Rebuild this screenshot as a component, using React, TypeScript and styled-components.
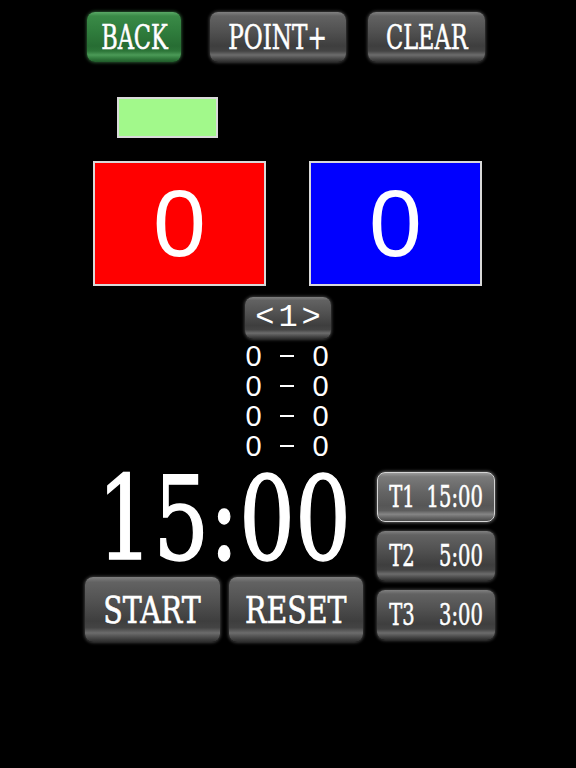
import React from "react";
import styled, { createGlobalStyle, css } from "styled-components";

type Tone = "gray" | "green" | "selected";

const GlobalStyle = createGlobalStyle`
  html, body {
    margin: 0;
    padding: 0;
    background: #000;
  }
  body {
    width: 576px;
    height: 768px;
    overflow: hidden;
    font-family: "DejaVu Serif", "Liberation Serif", serif;
    color: #fff;
  }
`;

const Screen = styled.div`
  width: 576px;
  height: 768px;
  background: #000;
  padding-top: 12px;
  box-sizing: border-box;
`;

const TopBar = styled.div`
  display: flex;
  align-items: center;
  padding-left: 87px;
`;

const tones = {
  gray: css`
    background: linear-gradient(
      to bottom,
      #808080 0%,
      #626262 8%,
      #505050 40%,
      #3e3e3e 68%,
      #444 78%,
      #6c6c6c 86%,
      #505050 92%,
      #2c2c2c 100%
    );
    box-shadow: 0 0 3px 1px rgba(110, 110, 110, 0.55);
  `,
  green: css`
    background: linear-gradient(
      to bottom,
      #5aa866 0%,
      #3a8a47 8%,
      #2f7c3c 40%,
      #276d33 68%,
      #2c7538 78%,
      #4b9a57 86%,
      #347f40 92%,
      #1f5a29 100%
    );
    box-shadow: 0 0 3px 1px rgba(70, 140, 80, 0.55);
  `,
  selected: css`
    background: linear-gradient(
      to bottom,
      #9a9a9a 0%,
      #7a7a7a 8%,
      #646464 40%,
      #565656 68%,
      #5c5c5c 78%,
      #858585 86%,
      #6a6a6a 92%,
      #4a4a4a 100%
    );
    box-shadow: 0 0 3px 1px rgba(160, 160, 160, 0.55);
  `,
};

const GlossButton = styled.button<{ $tone?: Tone; $w?: number; $h: number; $ml?: number }>`
  ${({ $tone = "gray" }) => tones[$tone]}
  width: ${({ $w }) => ($w ? `${$w}px` : "auto")};
  height: ${({ $h }) => $h}px;
  margin-left: ${({ $ml = 0 }) => $ml}px;
  border: ${({ $tone }) => ($tone === "selected" ? "1px solid #d4d4d4" : "none")};
  border-radius: 8px;
  padding: 0;
  display: flex;
  align-items: center;
  justify-content: center;
  color: #fff;
  cursor: pointer;
  box-sizing: border-box;
  overflow: hidden;
`;

const Label = styled.span<{ $size: number; $sx?: number }>`
  display: inline-block;
  flex-shrink: 0;
  font-family: "DejaVu Serif", "Liberation Serif", serif;
  font-size: ${({ $size }) => $size}px;
  line-height: 1;
  white-space: nowrap;
  -webkit-text-stroke: 0.7px #fff;
  transform: scaleX(${({ $sx = 0.7 }) => $sx});
  text-shadow: 0 0 1px rgba(0, 0, 0, 0.6);
`;

const Indicator = styled.div`
  margin: 35px 0 0 117px;
  width: 101px;
  height: 41px;
  background: #a2f98b;
  border: 2px solid #d9d9d9;
  box-sizing: border-box;
`;

const ScoreRow = styled.div`
  display: flex;
  gap: 43px;
  margin: 23px 0 0 93px;
`;

const ScoreBox = styled.div<{ $color: string }>`
  width: 173px;
  height: 125px;
  background: ${({ $color }) => $color};
  border: 2px solid #d9d9d9;
  box-sizing: border-box;
  display: flex;
  align-items: center;
  justify-content: center;
  font-family: "Liberation Sans", Arial, sans-serif;
  font-size: 95px;
  line-height: 1;
  color: #fff;
`;

const RoundNav = styled.div`
  display: flex;
  justify-content: center;
  margin-top: 11px;
`;

const NavLabel = styled.span`
  font-family: "Liberation Mono", "Courier New", monospace;
  font-size: 32px;
  line-height: 1;
  letter-spacing: 4px;
  padding-left: 4px;
  color: #fff;
`;

const History = styled.div`
  margin-top: 2px;
  display: flex;
  flex-direction: column;
  align-items: center;
`;

const HistoryLine = styled.div`
  display: grid;
  grid-template-columns: 17px 16px 17px;
  column-gap: 17px;
  justify-items: center;
  align-items: center;
  height: 30px;
  line-height: 28px;
  padding-right: 2px;
  font-family: "Liberation Sans", Arial, sans-serif;
  font-size: 29px;
  color: #fff;
`;

const Dash = styled.span`
  display: inline-block;
  width: 14px;
  height: 2px;
  background: #fff;
`;

const Bottom = styled.div`
  display: flex;
  gap: 14px;
  margin: 11px 0 0 85px;
`;

const TimerColumn = styled.div`
  width: 278px;
  display: flex;
  flex-direction: column;
`;

const Clock = styled.div`
  height: 93px;
  margin-bottom: 12px;
  display: flex;
  justify-content: center;
`;

const ClockText = styled.span`
  display: inline-block;
  font-family: "DejaVu Serif", "Liberation Serif", serif;
  font-size: 116px;
  line-height: 93px;
  -webkit-text-stroke: 1.5px #fff;
  transform: scaleX(0.76);
  white-space: nowrap;
  color: #fff;
`;

const ControlRow = styled.div`
  display: grid;
  grid-template-columns: 1fr 1fr;
  gap: 9px;
`;

const PresetColumn = styled.div`
  width: 118px;
  display: flex;
  flex-direction: column;
  gap: 9px;
`;

const PresetLabel = styled.span`
  display: inline-flex;
  flex-shrink: 0;
  justify-content: space-between;
  width: 144px;
  font-family: "DejaVu Serif", "Liberation Serif", serif;
  font-size: 30px;
  line-height: 1;
  white-space: nowrap;
  -webkit-text-stroke: 0.6px #fff;
  transform: scaleX(0.65);
`;

const history = [
  [0, 0],
  [0, 0],
  [0, 0],
  [0, 0],
];

const presets: { id: string; time: string; tone: Tone }[] = [
  { id: "T1", time: "15:00", tone: "selected" },
  { id: "T2", time: "5:00", tone: "gray" },
  { id: "T3", time: "3:00", tone: "gray" },
];

export default function App() {
  return (
    <Screen>
      <GlobalStyle />
      <TopBar>
        <GlossButton $tone="green" $w={94} $h={50}>
          <Label $size={34} $sx={0.66}>BACK</Label>
        </GlossButton>
        <GlossButton $w={136} $h={50} $ml={29}>
          <Label $size={34} $sx={0.68}>POINT+</Label>
        </GlossButton>
        <GlossButton $w={117} $h={50} $ml={22}>
          <Label $size={34} $sx={0.66}>CLEAR</Label>
        </GlossButton>
      </TopBar>

      <Indicator />

      <ScoreRow>
        <ScoreBox $color="#ff0000">0</ScoreBox>
        <ScoreBox $color="#0000ff">0</ScoreBox>
      </ScoreRow>

      <RoundNav>
        <GlossButton $w={86} $h={42}>
          <NavLabel>&lt;1&gt;</NavLabel>
        </GlossButton>
      </RoundNav>

      <History>
        {history.map(([a, b], i) => (
          <HistoryLine key={i}>
            <span>{a}</span>
            <Dash />
            <span>{b}</span>
          </HistoryLine>
        ))}
      </History>

      <Bottom>
        <TimerColumn>
          <Clock>
            <ClockText>15:00</ClockText>
          </Clock>
          <ControlRow>
            <GlossButton $h={65}>
              <Label $size={38} $sx={0.75}>START</Label>
            </GlossButton>
            <GlossButton $h={65}>
              <Label $size={38} $sx={0.75}>RESET</Label>
            </GlossButton>
          </ControlRow>
        </TimerColumn>

        <PresetColumn>
          {presets.map((p) => (
            <GlossButton key={p.id} $tone={p.tone} $h={50}>
              <PresetLabel>
                <span>{p.id}</span>
                <span>{p.time}</span>
              </PresetLabel>
            </GlossButton>
          ))}
        </PresetColumn>
      </Bottom>
    </Screen>
  );
}
